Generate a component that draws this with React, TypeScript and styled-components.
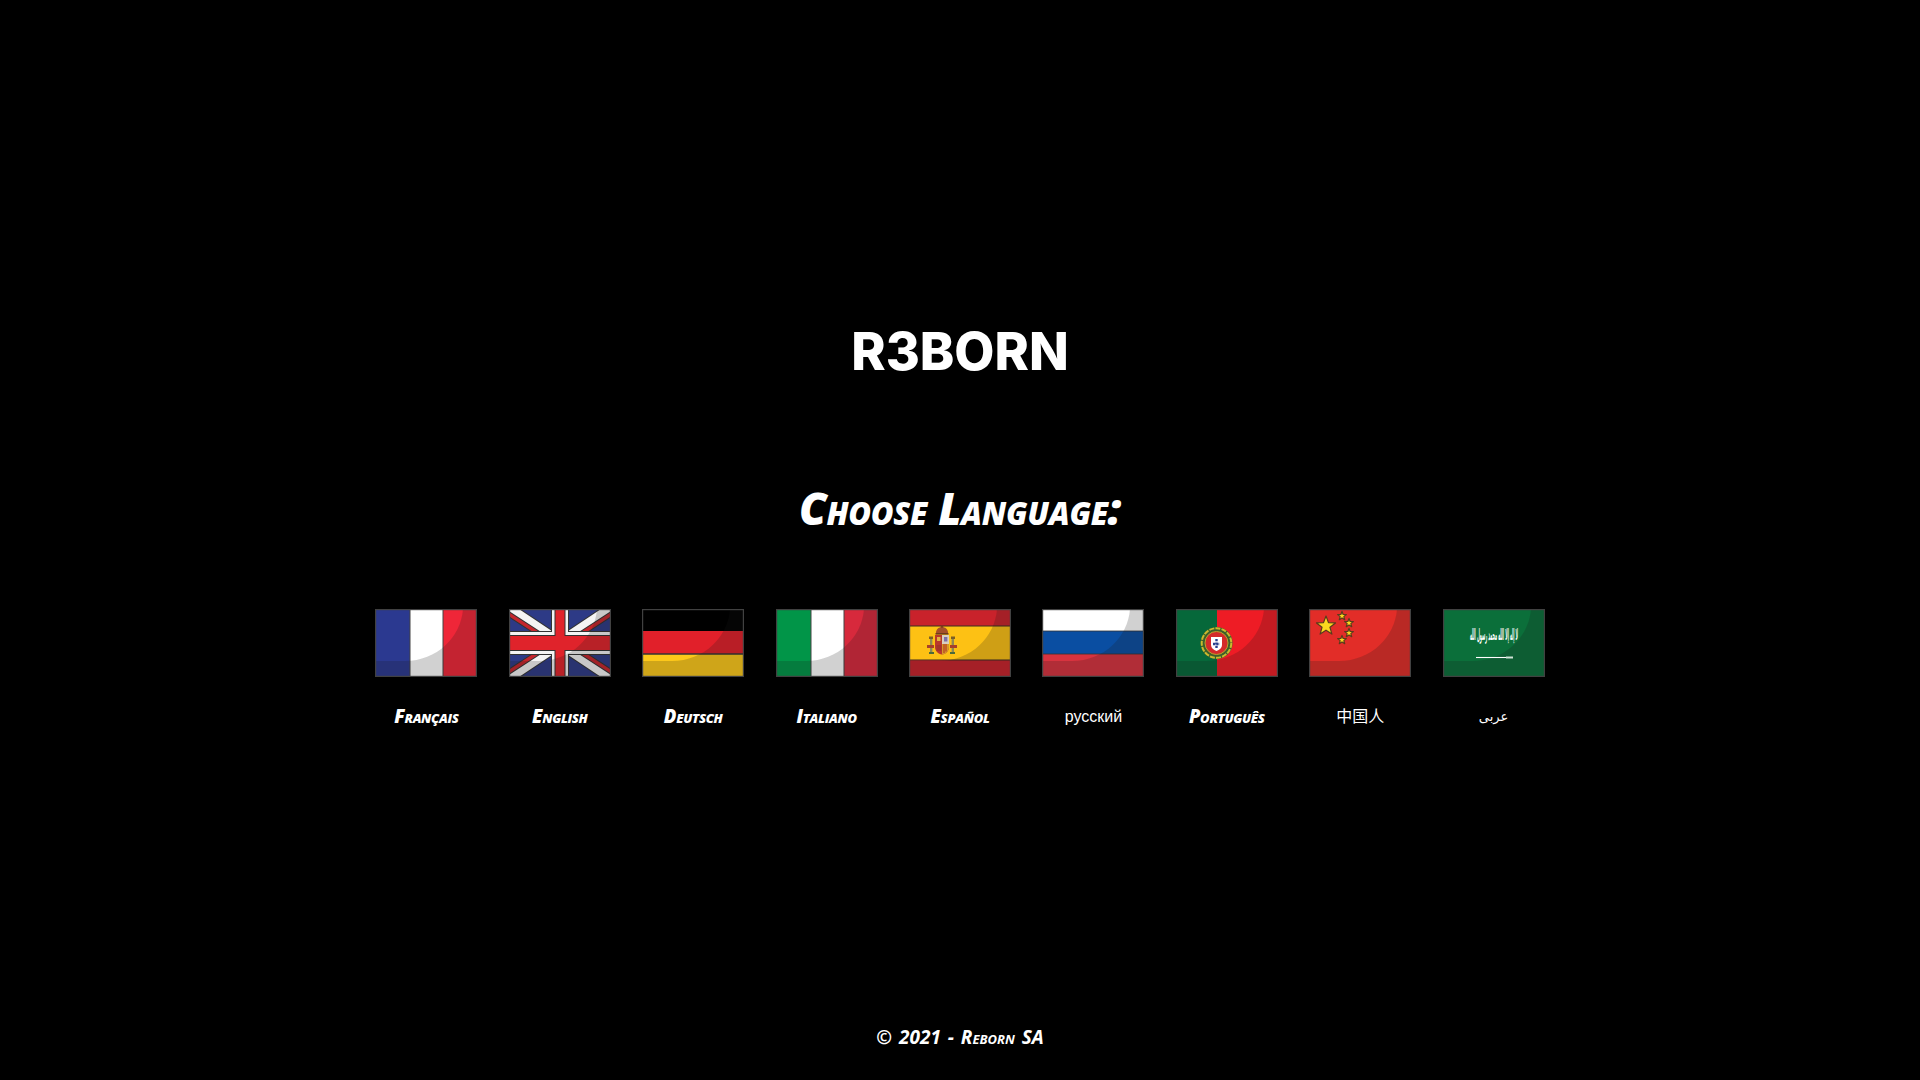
import React from "react";
import styled, { createGlobalStyle } from "styled-components";

const GlobalStyle = createGlobalStyle`
  html, body {
    margin: 0;
    padding: 0;
    background: #000;
  }
`;

const comicFont = `"Open Sans", "Noto Sans", sans-serif`;

const Page = styled.div`
  height: 1080px;
  overflow: hidden;
  display: flex;
  flex-direction: column;
  align-items: center;
  color: #fff;
  background: #000;
`;

const Logo = styled.h1`
  margin: 319px 0 0;
  height: 66px;
  line-height: 66px;
  font-family: "Inter", "Liberation Sans", sans-serif;
  font-size: 52px;
  font-weight: 800;
  letter-spacing: 0;
`;

const Heading = styled.h2`
  margin: 98px 0 0;
  height: 50px;
  line-height: 50px;
  font-family: ${comicFont};
  font-size: 44px;
  font-style: italic;
  font-weight: 800;
  font-variant: small-caps;
  letter-spacing: -0.3px;
`;

const LanguageRow = styled.div`
  display: grid;
  grid-template-columns: repeat(9, 102px);
  column-gap: 31.4px;
  margin-top: 76px;
`;

const Language = styled.a`
  display: flex;
  flex-direction: column;
  align-items: center;
  gap: 27px;
  color: #fff;
  text-decoration: none;
`;

const LanguageName = styled.span<{ $plain?: boolean; $small?: boolean }>`
  height: 24px;
  line-height: 24px;
  white-space: nowrap;
  font-size: ${(p) => (p.$small ? "13px" : p.$plain ? "16px" : "18.5px")};
  font-family: ${(p) =>
    p.$plain
      ? `"Liberation Sans", "Noto Sans CJK SC", "DejaVu Sans", sans-serif`
      : comicFont};
  font-style: ${(p) => (p.$plain ? "normal" : "italic")};
  font-weight: ${(p) => (p.$plain ? 400 : 800)};
  font-variant: ${(p) => (p.$plain ? "normal" : "small-caps")};
  letter-spacing: ${(p) => (p.$plain ? "0" : "-0.3px")};
  margin-top: ${(p) => (p.$plain ? "1px" : "0")};
`;

const Footer = styled.footer`
  margin-top: auto;
  margin-bottom: 31px;
  height: 24px;
  line-height: 24px;
  font-family: ${comicFont};
  font-size: 19px;
  font-style: italic;
  font-weight: 700;
  font-variant: small-caps;
  word-spacing: 2px;
`;

const FlagSvg = styled.svg`
  display: block;
  width: 102px;
  height: 68px;
`;

const SHADE = "M88 0C86 28 62 52 30 52L0 52L0 68L102 68L102 0Z";

const star = (cx: number, cy: number, r: number) => {
  const pts: string[] = [];
  for (let i = 0; i < 10; i++) {
    const rad = i % 2 === 0 ? r : r * 0.42;
    const a = -Math.PI / 2 + (i * Math.PI) / 5;
    pts.push(`${(cx + rad * Math.cos(a)).toFixed(2)},${(cy + rad * Math.sin(a)).toFixed(2)}`);
  }
  return pts.join(" ");
};

const Flag = ({ base, top }: { base: React.ReactNode; top?: React.ReactNode }) => (
  <FlagSvg viewBox="0 0 102 68">
    {base}
    <path d={SHADE} fill="#1a1a1a" opacity="0.2" />
    {top}
    <rect x="0.6" y="0.6" width="100.8" height="66.8" fill="none" stroke="#414141" strokeWidth="1.2" />
  </FlagSvg>
);

const France = () => (
  <Flag
    base={
      <>
        <rect width="35" height="68" fill="#2b3990" />
        <rect x="35" width="33" height="68" fill="#fff" />
        <rect x="68" width="34" height="68" fill="#ef2638" />
        <path d="M35 0V68M68 0V68" stroke="#444" strokeWidth="1" />
      </>
    }
  />
);

const Italy = () => (
  <Flag
    base={
      <>
        <rect width="35" height="68" fill="#019548" />
        <rect x="35" width="33" height="68" fill="#fff" />
        <rect x="68" width="34" height="68" fill="#d7293c" />
        <path d="M35 0V68M68 0V68" stroke="#444" strokeWidth="1" />
      </>
    }
  />
);

const UnitedKingdom = () => (
  <Flag
    base={
      <>
        <rect width="102" height="68" fill="#2d3a86" />
        <path d="M0 0L102 68M102 0L0 68" stroke="#333" strokeWidth="13" />
        <path d="M0 0L102 68M102 0L0 68" stroke="#f4f4f4" strokeWidth="11" />
        <path d="M-2 4L38 30M64 38L104 64M104 4L64 30M38 38L-2 64" stroke="#333" strokeWidth="5.4" />
        <path d="M-2 4L38 30M64 38L104 64M104 4L64 30M38 38L-2 64" stroke="#c5252c" strokeWidth="3.4" />
        <rect x="42" width="18" height="68" fill="#333" />
        <rect y="22" width="102" height="24" fill="#333" />
        <rect x="43" width="16" height="68" fill="#f4f4f4" />
        <rect y="23" width="102" height="22" fill="#f4f4f4" />
        <rect x="45.5" width="11" height="68" fill="#333" />
        <rect y="26" width="102" height="16" fill="#333" />
        <rect x="46.5" width="9" height="68" fill="#e0232b" />
        <rect y="27" width="102" height="14" fill="#e0232b" />
      </>
    }
  />
);

const Germany = () => (
  <Flag
    base={
      <>
        <rect width="102" height="22" fill="#000" />
        <rect y="22" width="102" height="23" fill="#e1202a" />
        <rect y="45" width="102" height="23" fill="#fdc81a" />
        <path d="M0 45H102" stroke="#333" strokeWidth="1.4" />
      </>
    }
  />
);

const SpainArms = () => (
  <g>
    <rect x="21" y="30" width="2.4" height="13" fill="#8f8a55" />
    <rect x="42.6" y="30" width="2.4" height="13" fill="#8f8a55" />
    <rect x="20" y="27.5" width="4" height="2.5" fill="#7a5f26" />
    <rect x="42" y="27.5" width="4" height="2.5" fill="#7a5f26" />
    <path d="M18 36h7v3h-7zM41 36h7v3h-7z" fill="#a8402a" />
    <path d="M20 43h5v2h-5zM41 43h5v2h-5z" fill="#4b6a3a" />
    <path d="M27 24C27 20 30 18 33 18C36 18 39 20 39 24Z" fill="#a5502a" />
    <circle cx="33" cy="17.5" r="1.2" fill="#7a3b1d" />
    <path d="M26.5 24h13v1.6h-13z" fill="#6e3c1c" />
    <path d="M26 26H40V38C40 42 37 45 33 45.6C29 45 26 42 26 38Z" fill="#b9382c" />
    <rect x="33" y="26" width="7" height="9" fill="#d9cfc0" />
    <rect x="35" y="28" width="3.4" height="4.5" fill="#7c6fa8" />
    <path d="M33 35H40V38C40 42 37 45 33 45.6Z" fill="#d69a2a" />
    <path d="M35 35v9M37 35v7.5" stroke="#b02a22" strokeWidth="1" />
    <rect x="27.5" y="36" width="5" height="6" fill="#a5342a" />
    <rect x="28" y="28" width="3.5" height="4" fill="#e0b341" />
  </g>
);

const Spain = () => (
  <Flag
    base={
      <>
        <rect width="102" height="68" fill="#c9222b" />
        <rect y="17" width="102" height="34" fill="#fdc114" />
        <path d="M0 17H102M0 51H102" stroke="#3e2a20" strokeWidth="1.2" />
      </>
    }
    top={<SpainArms />}
  />
);

const Russia = () => (
  <Flag
    base={
      <>
        <rect width="102" height="22" fill="#fff" />
        <rect y="22" width="102" height="23" fill="#0a4ea2" />
        <rect y="45" width="102" height="23" fill="#d8333f" />
        <path d="M0 22H102M0 45H102" stroke="#333" strokeWidth="0.8" />
      </>
    }
  />
);

const Portugal = () => (
  <Flag
    base={
      <>
        <rect width="41" height="68" fill="#06683a" />
        <rect x="41" width="61" height="68" fill="#ee1c25" />
      </>
    }
    top={
      <g>
        <circle cx="40.5" cy="34" r="16" fill="#3c5f2a" />
        <circle cx="40.5" cy="34" r="14.8" fill="none" stroke="#c9b92e" strokeWidth="2" strokeDasharray="5 1.2" />
        <circle cx="40.5" cy="34" r="11.5" fill="#d42a2a" stroke="#b7a52b" strokeWidth="1" />
        <path d="M35 28H46V36C46 39 43.5 41 40.5 42C37.5 41 35 39 35 36Z" fill="#fff" />
        <path d="M40.5 30v10M37 35h7" stroke="#28408f" strokeWidth="2.4" strokeDasharray="2.2 1.2" />
      </g>
    }
  />
);

const China = () => (
  <Flag
    base={<rect width="102" height="68" fill="#e22d28" />}
    top={
      <g fill="#fbd91e" stroke="#5b3a1c" strokeWidth="1.2" strokeLinejoin="round">
        <polygon points={star(17, 17, 10)} />
        <polygon points={star(33, 7, 4.6)} />
        <polygon points={star(40, 14, 4.6)} />
        <polygon points={star(40, 24, 4.6)} />
        <polygon points={star(33, 31, 4.6)} />
      </g>
    }
  />
);

const ShahadaText = styled.text`
  font-family: "DejaVu Sans", sans-serif;
  font-size: 14px;
  font-weight: 700;
  fill: #fff;
`;

const SaudiArabia = () => (
  <Flag
    base={<rect width="102" height="68" fill="#0b6f3a" />}
    top={
      <g>
        <ShahadaText transform="translate(51 31) scale(0.24 1.1)" textAnchor="middle">
          لا إله إلا الله محمد رسول الله
        </ShahadaText>
        <path d="M33 48.5H63" stroke="#fff" strokeWidth="1.1" />
        <path d="M63 47.5H70V49.5H63Z" fill="#cfe3d6" />
      </g>
    }
  />
);

const languages = [
  { name: "Français", flag: <France /> },
  { name: "English", flag: <UnitedKingdom /> },
  { name: "Deutsch", flag: <Germany /> },
  { name: "Italiano", flag: <Italy /> },
  { name: "Español", flag: <Spain /> },
  { name: "русский", flag: <Russia />, plain: true },
  { name: "Português", flag: <Portugal /> },
  { name: "中国人", flag: <China />, plain: true },
  { name: "عربى", flag: <SaudiArabia />, plain: true, small: true },
];

export default function App() {
  return (
    <Page>
      <GlobalStyle />
      <Logo>R3BORN</Logo>
      <Heading>Choose Language:</Heading>
      <LanguageRow>
        {languages.map((l) => (
          <Language key={l.name} href="#">
            {l.flag}
            <LanguageName $plain={l.plain} $small={l.small}>
              {l.name}
            </LanguageName>
          </Language>
        ))}
      </LanguageRow>
      <Footer>© 2021 - Reborn SA</Footer>
    </Page>
  );
}
